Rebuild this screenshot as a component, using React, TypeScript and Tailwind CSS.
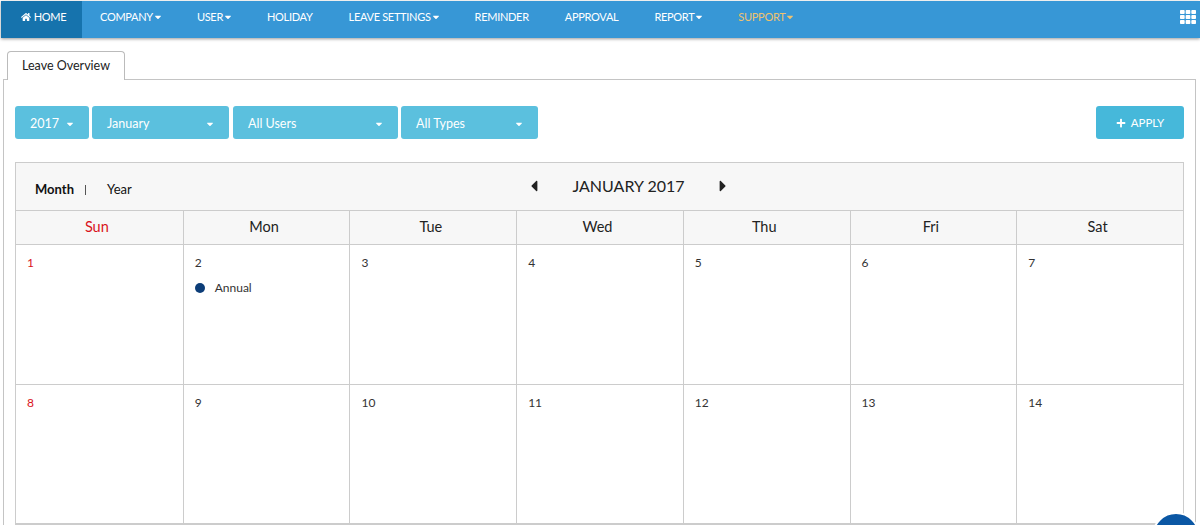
import { FaCaretDown, FaCaretLeft, FaCaretRight, FaHome, FaPlus, FaTh } from "react-icons/fa";

const font = "font-['Lato','Noto_Sans',sans-serif]";

const navItems = [
  { label: "COMPANY", caret: true },
  { label: "USER", caret: true },
  { label: "HOLIDAY", caret: false },
  { label: "LEAVE SETTINGS", caret: true },
  { label: "REMINDER", caret: false },
  { label: "APPROVAL", caret: false },
  { label: "REPORT", caret: true },
  { label: "SUPPORT", caret: true, gold: true },
];

const filters = [
  { label: "2017", w: "w-[74px]" },
  { label: "January", w: "w-[137px]" },
  { label: "All Users", w: "ml-px w-[165px]" },
  { label: "All Types", w: "w-[137px]" },
];

const days = ["Sun", "Mon", "Tue", "Wed", "Thu", "Fri", "Sat"];
const weeks = [
  { h: "h-[140px]", cells: [1, 2, 3, 4, 5, 6, 7] },
  { h: "h-[139px]", cells: [8, 9, 10, 11, 12, 13, 14] },
];

export default function App() {
  return (
    <div className={`relative h-[525px] w-[1200px] overflow-hidden bg-white ${font}`}>
      <nav className="mt-px ml-px flex h-[37px] items-stretch bg-[#3797d6] text-[11px] tracking-[-0.3px] text-white shadow-[0_1px_3px_rgba(0,0,0,0.4)]">
        <a className="flex w-[81px] items-center justify-center gap-[3px] bg-[#1673ad] pb-[5px] pl-[4px]">
          <FaHome size={10} />
          HOME
        </a>
        {navItems.map((item) => (
          <a
            key={item.label}
            className={`flex items-center px-[18px] pb-[5px] ${item.gold ? "text-[#eec26f]" : ""}`}
          >
            {item.label}
            {item.caret && <FaCaretDown size={10} className="-mr-[2px]" />}
          </a>
        ))}
        <div className="ml-auto flex items-center pr-[4px] pb-[5px]">
          <FaTh size={16} />
        </div>
      </nav>

      <div className="mt-[13px] px-[3px]">
        <div className="relative z-10 ml-1 flex h-[29px] w-[118px] items-center justify-center rounded-t-[4px] border border-b-0 border-[#bbbbbb] bg-white text-[12.5px] text-[#222222]">
          Leave Overview
        </div>

        <div className="-mt-px h-[500px] w-[1193px] border border-[#c4c4c4] px-[11px] pt-[26px]">
          <div className="flex h-[33px] justify-between">
            <div className="flex gap-[3px]">
              {filters.map((f) => (
                <button
                  key={f.label}
                  type="button"
                  className={`flex items-center justify-between rounded-[3px] bg-[#5bc0de] pt-[3px] pr-[14px] pl-[15px] text-[12.5px] text-white ${f.w}`}
                >
                  {f.label}
                  <FaCaretDown size={10} />
                </button>
              ))}
            </div>
            <button
              type="button"
              className="flex w-[88px] items-center justify-center gap-[5px] rounded-[3px] bg-[#46b8da] text-[11.5px] text-white"
            >
              <FaPlus size={10} />
              APPLY
            </button>
          </div>

          <div className="mt-[23px] w-[1169px] border border-[#cccccc]">
            <div className="relative flex h-[48px] items-center justify-center border-b border-[#cccccc] bg-[#f7f7f7] pb-[2px] pl-[58px]">
              <div className="absolute top-[17px] left-[19px] flex items-center text-[13px] text-[#111111]">
                <span className="font-bold">Month</span>
                <span className="mr-[21px] ml-[11px] h-[10px] w-px bg-[#555555]" />
                <span>Year</span>
              </div>
              <div className="flex items-center text-[#222222]">
                <FaCaretLeft size={18} />
                <span className="mx-[29px] text-[16px] leading-none">JANUARY 2017</span>
                <FaCaretRight size={18} />
              </div>
            </div>

            <div className="grid h-[34px] grid-cols-7 border-b border-[#cccccc] bg-[#f7f7f7] text-[14.5px] text-[#222222]">
              {days.map((d, i) => (
                <div
                  key={d}
                  className={`flex items-center justify-center border-[#cccccc] pr-[5px] pb-[2px] ${i > 0 ? "border-l" : ""} ${i === 0 ? "text-[#d9141c]" : ""}`}
                >
                  {d}
                </div>
              ))}
            </div>

            {weeks.map((week) => (
              <div key={week.cells[0]} className={`grid grid-cols-7 border-b border-[#cccccc] text-[12px] text-[#333333] ${week.h}`}>
                {week.cells.map((n, i) => (
                  <div
                    key={n}
                    className={`border-[#cccccc] pt-[11px] ${i > 0 ? "border-l pl-[11px]" : "pl-[11px] text-[#d9141c]"}`}
                  >
                    <div className="leading-[14px]">{n}</div>
                    {n === 2 && (
                      <div className="mt-[11px] flex items-center gap-[10px] leading-[14px]">
                        <span className="h-[10px] w-[10px] rounded-full bg-[#0c3d78]" />
                        Annual
                      </div>
                    )}
                  </div>
                ))}
              </div>
            ))}
          </div>
        </div>
      </div>

      <div className="absolute top-[512px] left-[1152px] h-[48px] w-[48px] rounded-full border-2 border-white bg-[#0b57a4]" />
    </div>
  );
}
